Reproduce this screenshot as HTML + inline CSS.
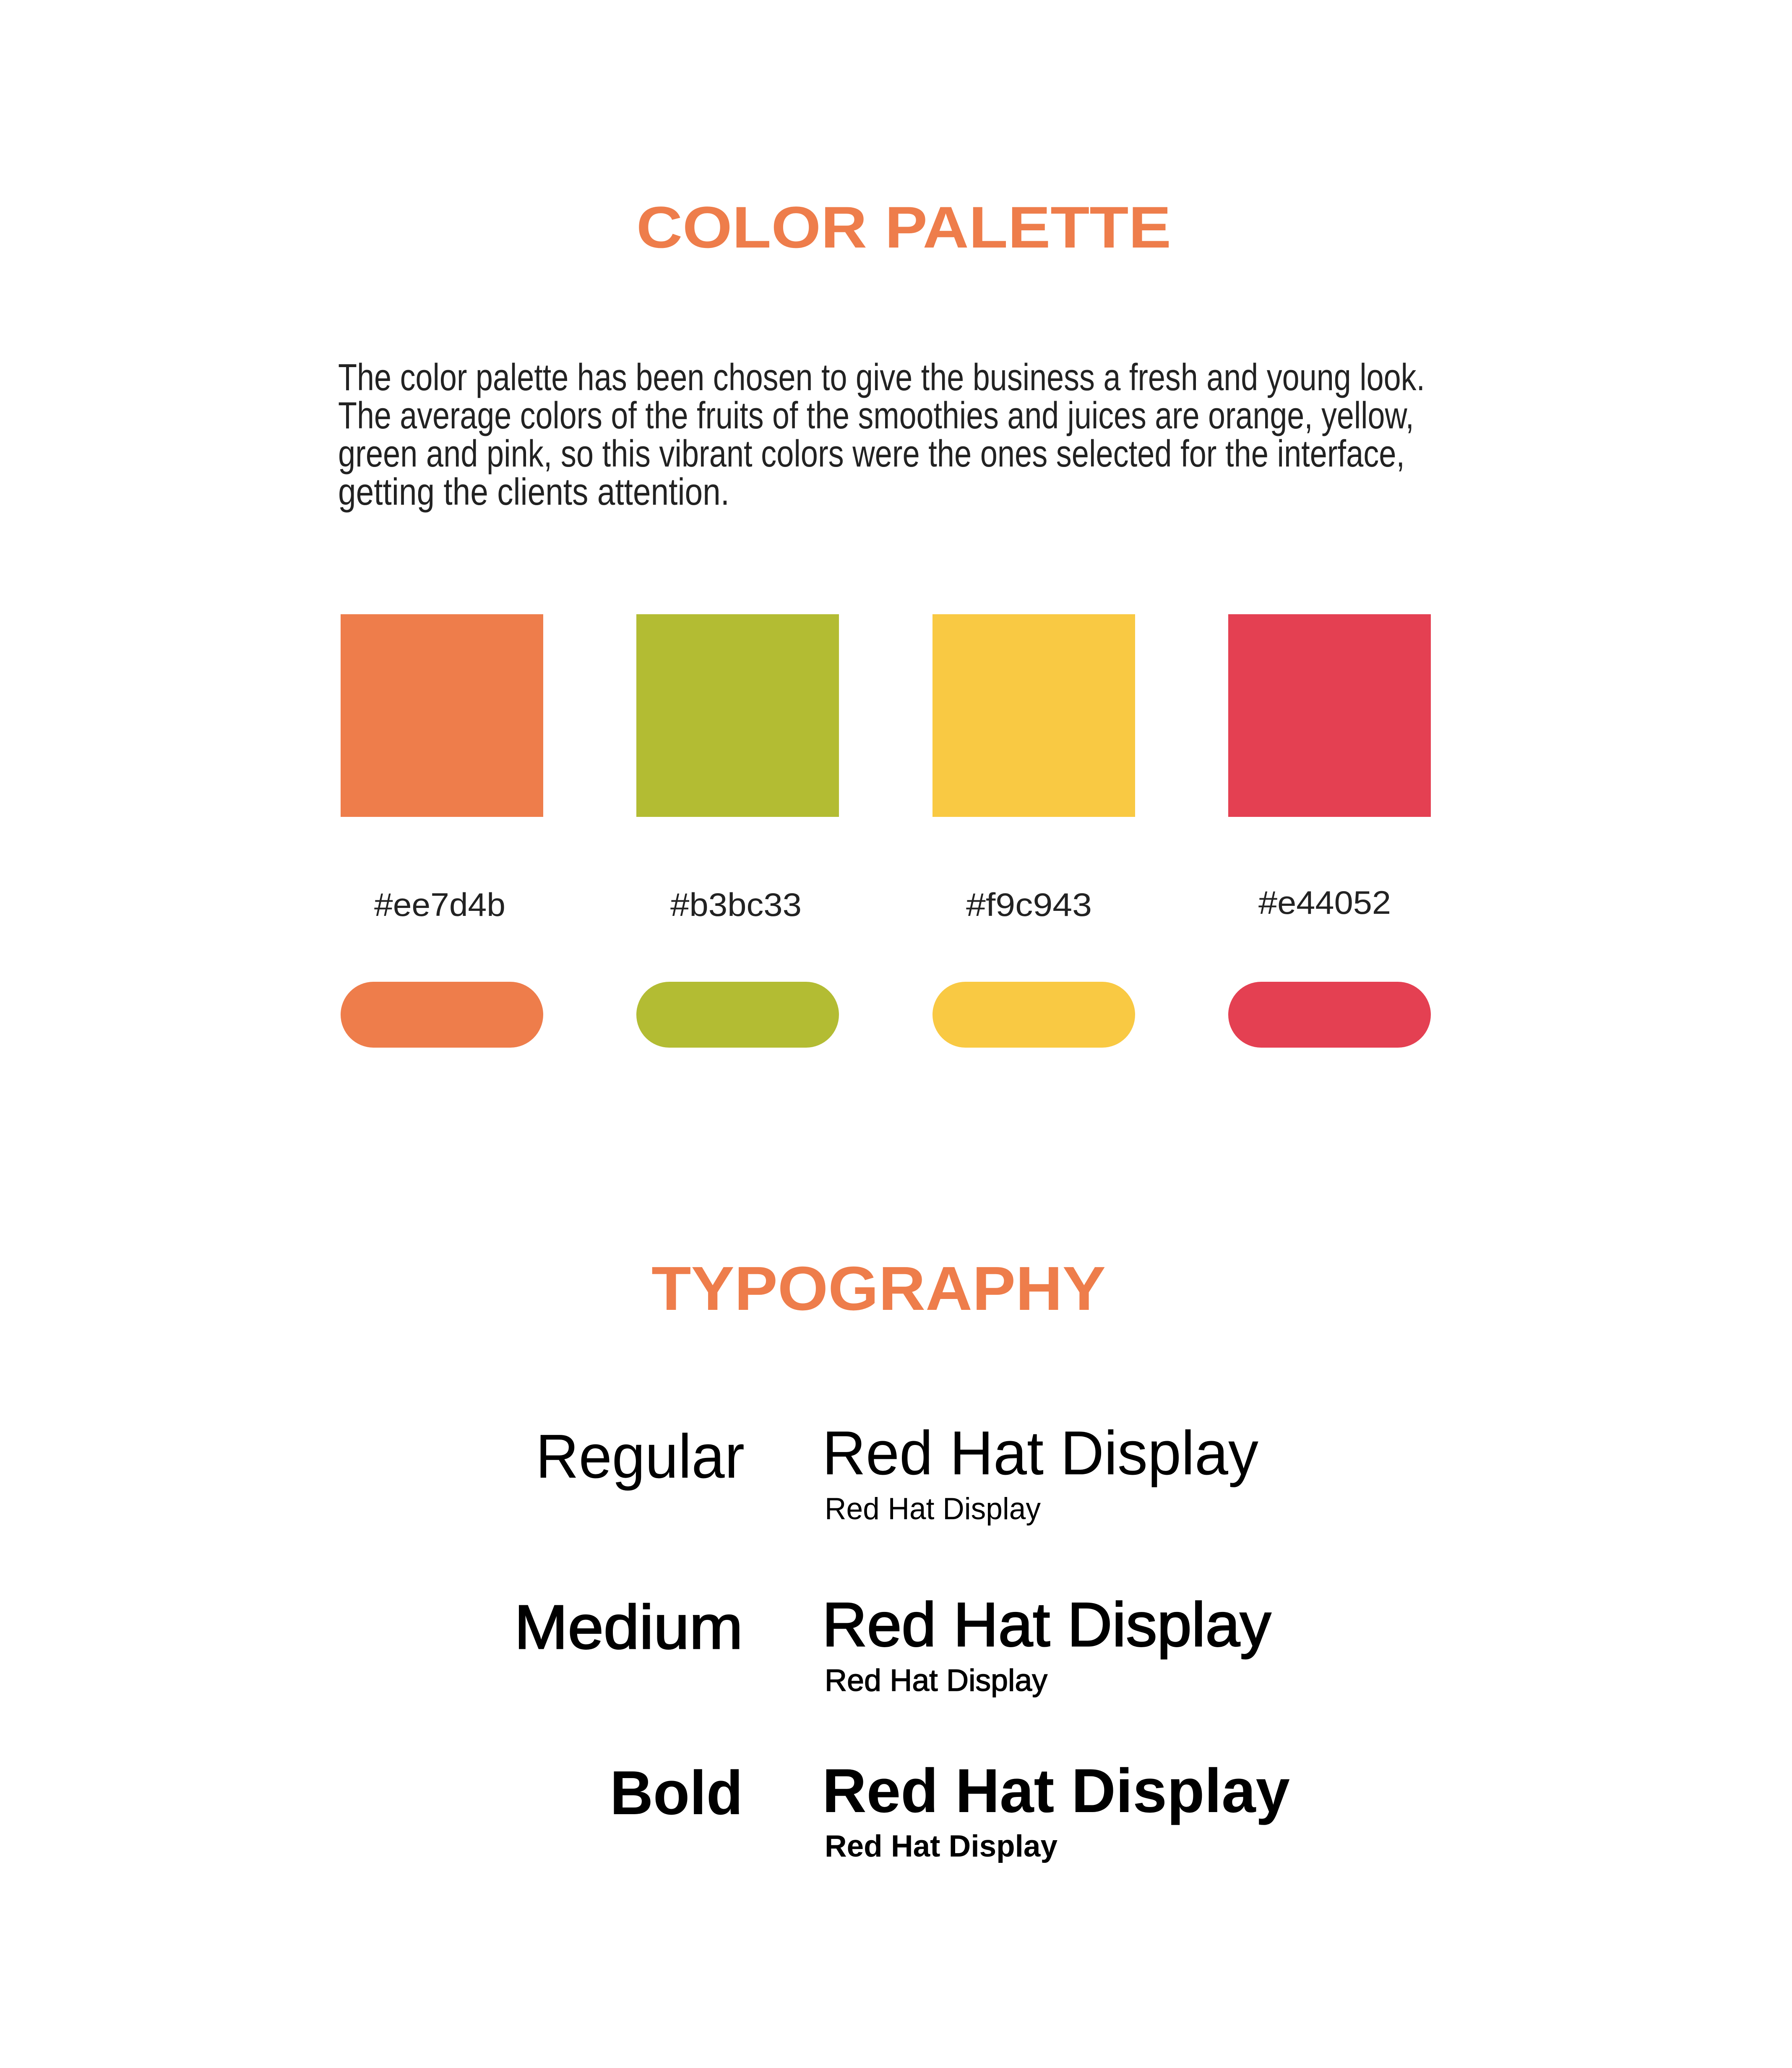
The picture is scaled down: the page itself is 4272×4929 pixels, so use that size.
<!DOCTYPE html>
<html><head><meta charset="utf-8"><style>
html,body{margin:0;padding:0;background:#fff;}
svg{display:block;}
</style></head><body>
<svg width="4272" height="4929" viewBox="0 0 4272 4929" xmlns="http://www.w3.org/2000/svg" font-family="Liberation Sans, sans-serif">
<rect width="4272" height="4929" fill="#fff"/>
<g transform="translate(-5,-7)">
<text x="1522" y="597" font-size="140" font-weight="bold" fill="#ee7d4b" textLength="1275" lengthAdjust="spacingAndGlyphs">COLOR  PALETTE</text>
<g font-size="90" fill="#222">
<text x="811" y="937" textLength="2591" lengthAdjust="spacingAndGlyphs">The color palette has been chosen to give the business a fresh and young look.</text>
<text x="811" y="1028" textLength="2565" lengthAdjust="spacingAndGlyphs">The average colors of the fruits of the smoothies and juices are orange, yellow,</text>
<text x="811" y="1119" textLength="2543" lengthAdjust="spacingAndGlyphs">green and pink, so this vibrant colors were the ones selected for the interface,</text>
<text x="811" y="1210" textLength="933" lengthAdjust="spacingAndGlyphs">getting the clients attention.</text>
</g>
<rect x="817" y="1471" width="483" height="483" fill="#ee7d4b"/>
<rect x="1522" y="1471" width="483" height="483" fill="#b3bc33"/>
<rect x="2228" y="1471" width="483" height="483" fill="#f9c943"/>
<rect x="2933" y="1471" width="483" height="483" fill="#e44052"/>
<g font-size="78" fill="#222">
<text x="897" y="2190" textLength="313" lengthAdjust="spacingAndGlyphs">#ee7d4b</text>
<text x="1603" y="2190" textLength="313" lengthAdjust="spacingAndGlyphs">#b3bc33</text>
<text x="2308" y="2190" textLength="300" lengthAdjust="spacingAndGlyphs">#f9c943</text>
<text x="3005" y="2185" textLength="316" lengthAdjust="spacingAndGlyphs">#e44052</text>
</g>
<rect x="817" y="2347" width="483" height="157" rx="78.5" fill="#ee7d4b"/>
<rect x="1522" y="2347" width="483" height="157" rx="78.5" fill="#b3bc33"/>
<rect x="2228" y="2347" width="483" height="157" rx="78.5" fill="#f9c943"/>
<rect x="2933" y="2347" width="483" height="157" rx="78.5" fill="#e44052"/>
<text x="1558" y="3129" font-size="148" font-weight="bold" fill="#ee7d4b" textLength="1083" lengthAdjust="spacingAndGlyphs">TYPOGRAPHY</text>
<g fill="#000">
<text x="1282" y="3529" font-size="148" textLength="498" lengthAdjust="spacingAndGlyphs">Regular</text>
<text x="1965" y="3521" font-size="148" textLength="1040" lengthAdjust="spacingAndGlyphs">Red Hat Display</text>
<text x="1971" y="3628" font-size="73" textLength="515" lengthAdjust="spacingAndGlyphs">Red Hat Display</text>
<text x="1231" y="3936" font-size="148" stroke="#000" stroke-width="3" textLength="545" lengthAdjust="spacingAndGlyphs">Medium</text>
<text x="1965" y="3930" font-size="148" stroke="#000" stroke-width="3" textLength="1070" lengthAdjust="spacingAndGlyphs">Red Hat Display</text>
<text x="1971" y="4037" font-size="73" stroke="#000" stroke-width="1.5" textLength="531" lengthAdjust="spacingAndGlyphs">Red Hat Display</text>
<text x="1459" y="4331" font-size="148" font-weight="bold" textLength="317" lengthAdjust="spacingAndGlyphs">Bold</text>
<text x="1965" y="4326" font-size="148" font-weight="bold" textLength="1115" lengthAdjust="spacingAndGlyphs">Red Hat Display</text>
<text x="1971" y="4432" font-size="73" font-weight="bold" textLength="555" lengthAdjust="spacingAndGlyphs">Red Hat Display</text>
</g>
</g>
</svg>
</body></html>
